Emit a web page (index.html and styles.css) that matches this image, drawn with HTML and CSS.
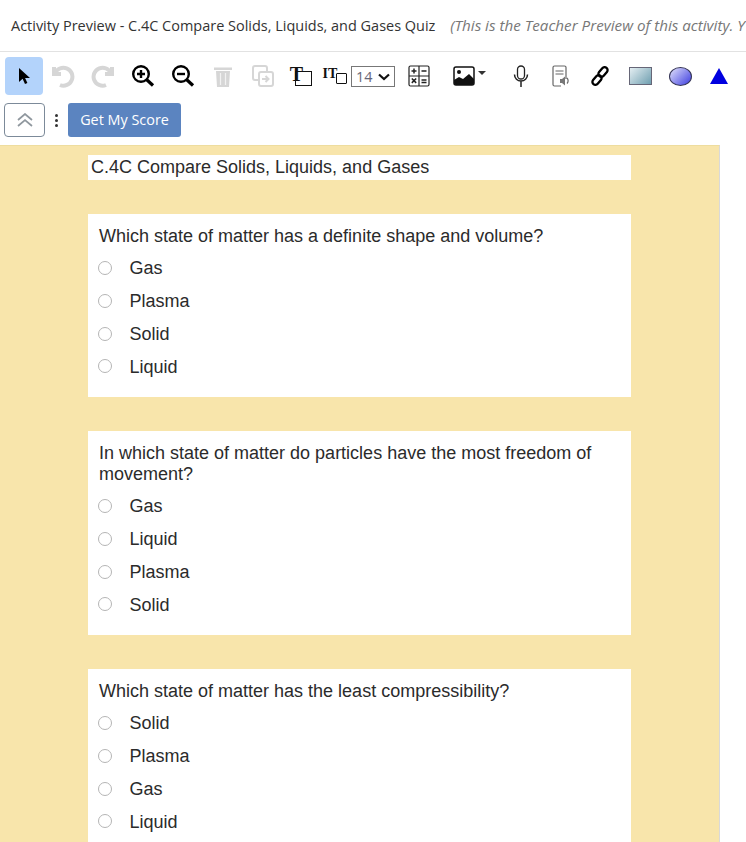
FILE: index.html
```html
<!DOCTYPE html>
<html lang="en">
<head>
  <meta charset="UTF-8" />
  <title>Activity Preview</title>
  <link rel="stylesheet" href="styles.css">
</head>
<body>

  <header class="title-bar">
    <span class="title">Activity Preview - C.4C Compare Solids, Liquids, and Gases Quiz</span>
    <em class="note">(This is the Teacher Preview of this activity. Y</em>
  </header>

  <div class="toolbar">
    <button class="tool active">
      <svg width="16" height="18" viewBox="0 0 16 18"><path d="M3 1v14l3.600-3.200L9 17l2.400-1-2.300-5H14z" fill="#000"/></svg>
    </button>
    <button class="tool">
      <svg width="24" height="24" viewBox="0 0 24 24" fill="none" stroke="#d6d6d6" stroke-width="4"><path d="M3 3v7h7"/><path d="M4 9.500A9 9 0 1 1 9 21"/></svg>
    </button>
    <button class="tool">
      <svg width="24" height="24" viewBox="0 0 24 24" fill="none" stroke="#d6d6d6" stroke-width="4"><path d="M21 3v7h-7"/><path d="M20 9.500A9 9 0 1 0 15 21"/></svg>
    </button>
    <button class="tool">
      <svg width="24" height="24" viewBox="0 0 24 24" fill="none" stroke="#000" stroke-width="2.400"><circle cx="10" cy="10" r="7.800"/><path d="M15.500 15.500l6.500 6" stroke-width="3.200"/><path d="M10 6v8M6 10h8"/></svg>
    </button>
    <button class="tool">
      <svg width="24" height="24" viewBox="0 0 24 24" fill="none" stroke="#000" stroke-width="2.400"><circle cx="10" cy="10" r="7.800"/><path d="M15.500 15.500l6.500 6" stroke-width="3.200"/><path d="M6 10h8"/></svg>
    </button>
    <button class="tool">
      <svg width="20" height="21" viewBox="0 0 20 21" fill="#d6d6d6"><path d="M1 1.500h18v2.500H1zM3 5h14l-1 16H4z"/><path d="M7.500 7v12M12.500 7v12" stroke="#f2f2f2" stroke-width="1.200"/></svg>
    </button>
    <button class="tool">
      <svg width="22" height="22" viewBox="0 0 22 22" fill="none" stroke="#d6d6d6" stroke-width="2"><path d="M6 15H3a2 2 0 0 1-2-2V3a2 2 0 0 1 2-2h10a2 2 0 0 1 2 2v3"/><rect x="7" y="7" width="14" height="14" rx="2"/><path d="M10 14h6M13.500 11l3 3-3 3"/></svg>
    </button>
    <button class="tool text-tool">
      <span class="tool-t">T</span><span class="tool-box"></span>
    </button>
    <button class="tool text-tool small">
      <span class="tool-t">IT</span><span class="tool-box"></span>
    </button>
    <div class="size-wrap">
      <select class="size"><option>14</option></select>
      <svg class="chevron" width="12" height="8" viewBox="0 0 12 8" fill="none" stroke="#111" stroke-width="2.200"><path d="M1 1.500l5 4.500 5-4.500"/></svg>
    </div>
    <button class="tool calc">
      <svg width="22" height="22" viewBox="0 0 22 22" fill="none" stroke="#222" stroke-width="1.200"><rect x="1" y="1" width="20" height="20" rx="1.500"/><path d="M11 1v20M1 11h20"/><path d="M3.500 6h5M6 3.500v5M13.500 6h5M13.500 15h5M13.500 17.500h5M3.800 13.500l4.400 4.400M8.200 13.500l-4.400 4.400" stroke-width="1.500"/></svg>
    </button>
    <button class="tool wide">
      <svg width="22" height="20" viewBox="0 0 22 20"><rect x="1" y="1" width="20" height="18" rx="2" fill="#fff" stroke="#111" stroke-width="1.500"/><circle cx="6" cy="6" r="2" fill="#111"/><path d="M1 14l5-3 4 2 6-5 5 5v4a2 2 0 0 1-2 2H3a2 2 0 0 1-2-2z" fill="#111"/></svg>
      <span class="caret"></span>
    </button>
    <button class="tool">
      <svg width="16" height="23" viewBox="0 0 16 23" fill="none" stroke="#222" stroke-width="1.300"><rect x="4.500" y="1" width="7" height="13" rx="3.500"/><path d="M1.500 9.500c0 4 3 6.500 6.500 6.500s6.500-2.500 6.500-6.500M8 16v6" stroke-width="1.500"/></svg>
    </button>
    <button class="tool">
      <svg width="18" height="22" viewBox="0 0 18 22" fill="none" stroke="#666" stroke-width="1.200"><path d="M14 14V2.500A1.500 1.500 0 0 0 12.500 1h-10A1.500 1.500 0 0 0 1 2.500v17A1.500 1.500 0 0 0 2.500 21H9"/><path d="M3.500 6h8M3.500 9h8"/><path d="M8 14h2l3-2.500v9L10 18H8z" fill="#777" stroke="none"/><path d="M15 13c1.500 1.500 1.500 4 0 5.500"/></svg>
    </button>
    <button class="tool nudge">
      <svg width="22" height="22" viewBox="0 0 22 22" fill="none" stroke="#000" stroke-width="2.300"><rect x="11" y="1.500" width="6" height="11" rx="3" transform="rotate(40 14 7)"/><rect x="5" y="9.500" width="6" height="11" rx="3" transform="rotate(40 8 15)"/></svg>
    </button>
    <button class="tool"><span class="shape-rect"></span></button>
    <button class="tool"><span class="shape-oval"></span></button>
    <button class="tool nudge">
      <svg width="20" height="18" viewBox="0 0 20 18"><path d="M10 1l9 16H1z" fill="#0000e0"/></svg>
    </button>
  </div>

  <div class="actions">
    <button class="collapse">
      <svg width="16" height="14" viewBox="0 0 16 14" fill="none" stroke="#8f979e" stroke-width="1.700"><path d="M1 7l7-6 7 6M1 13l7-6 7 6"/></svg>
    </button>
    <span class="dots"><i></i><i></i><i></i></span>
    <button class="score">Get My Score</button>
  </div>

  <main class="sheet">
    <h1 class="quiz-title">C.4C Compare Solids, Liquids, and Gases</h1>

    <section class="question">
      <p class="prompt">Which state of matter has a definite shape and volume?</p>
      <label class="choice"><input type="radio" name="q1">Gas</label>
      <label class="choice"><input type="radio" name="q1">Plasma</label>
      <label class="choice"><input type="radio" name="q1">Solid</label>
      <label class="choice"><input type="radio" name="q1">Liquid</label>
    </section>

    <section class="question">
      <p class="prompt">In which state of matter do particles have the most freedom of movement?</p>
      <label class="choice"><input type="radio" name="q2">Gas</label>
      <label class="choice"><input type="radio" name="q2">Liquid</label>
      <label class="choice"><input type="radio" name="q2">Plasma</label>
      <label class="choice"><input type="radio" name="q2">Solid</label>
    </section>

    <section class="question">
      <p class="prompt">Which state of matter has the least compressibility?</p>
      <label class="choice"><input type="radio" name="q3">Solid</label>
      <label class="choice"><input type="radio" name="q3">Plasma</label>
      <label class="choice"><input type="radio" name="q3">Gas</label>
      <label class="choice"><input type="radio" name="q3">Liquid</label>
    </section>
  </main>

</body>
</html>
```

FILE: styles.css
```css
html, body {
  height: 842px;
  overflow: hidden;
}

body {
  margin: 0;
  font-family: "Open Sans", sans-serif;
  background-color: #fff;
  color: #333;
}

button {
  font-family: inherit;
  cursor: pointer;
}

.title-bar {
  height: 52px;
  box-sizing: border-box;
  padding: 15px 0 0 11px;
  border-bottom: 1px solid #e2e2e2;
  font-size: 14.470px;
  line-height: 20px;
  white-space: nowrap;
  overflow: hidden;
}

.note {
  margin-left: 11px;
  font-size: 15.200px;
  color: #777;
}

/* Toolbar */
.toolbar {
  display: flex;
  align-items: center;
  height: 38px;
  margin-top: 5px;
  padding-left: 5px;
  white-space: nowrap;
}

.tool {
  flex: none;
  display: flex;
  align-items: center;
  justify-content: center;
  width: 40px;
  height: 38px;
  padding: 0;
  border: none;
  border-radius: 4px;
  background: none;
}

.tool.active {
  width: 38px;
  background-color: #b3d3fb;
}

.tool.nudge {
  margin-left: -1px;
}

.text-tool {
  width: 36px;
}

.tool-t {
  font-family: "Liberation Serif", serif;
  font-weight: bold;
  font-size: 20px;
  line-height: 1;
  color: #111;
  margin-top: -4px;
  margin-right: -8px;
}

.tool-box {
  flex: none;
  width: 15px;
  height: 13px;
  margin-top: 5px;
  border: 1px solid #111;
}

.text-tool.small {
  width: 32px;
}

.text-tool.small .tool-t {
  font-size: 14px;
  margin-top: -5px;
  margin-right: -1px;
}

.text-tool.small .tool-box {
  width: 9px;
  height: 9px;
  border-radius: 1px;
}

.size-wrap {
  flex: none;
  position: relative;
  width: 44px;
  height: 21px;
}

.size {
  display: block;
  width: 100%;
  height: 100%;
  padding: 0 0 0 4px;
  border: 1px solid #777;
  border-radius: 0;
  background: #fff;
  appearance: none;
  font-family: "Open Sans", sans-serif;
  font-size: 14.400px;
  color: #667;
}

.chevron {
  position: absolute;
  top: 7px;
  right: 5px;
}

.calc {
  margin-left: 4px;
}

.wide {
  width: 62px;
  padding-right: 2px;
  gap: 3px;
}

.caret {
  border-top: 4px solid #333;
  border-left: 4px solid transparent;
  border-right: 4px solid transparent;
  margin-bottom: 6px;
}

.shape-rect {
  width: 21px;
  height: 16px;
  border: 1px solid #667;
  background: linear-gradient(135deg, #e4eef2, #6f9fb0);
}

.shape-oval {
  width: 21px;
  height: 17px;
  border: 1px solid #335;
  border-radius: 50%;
  background: linear-gradient(135deg, #e2e2fb, #3d3de0);
}

/* Score row */
.actions {
  display: flex;
  align-items: center;
  height: 34px;
  margin-top: 8px;
  padding-left: 4px;
}

.collapse {
  display: flex;
  align-items: center;
  justify-content: center;
  width: 41px;
  height: 34px;
  padding: 0;
  border: 1px solid #7c8a99;
  border-radius: 4px;
  background: #fff;
}

.dots {
  display: flex;
  flex-direction: column;
  gap: 2px;
  margin: 0 10px;
}

.dots i {
  width: 3px;
  height: 3px;
  border-radius: 50%;
  background: #333;
}

.score {
  height: 34px;
  width: 113px;
  padding: 0 0 2px;
  border: none;
  border-radius: 3px;
  background-color: #5b84c0;
  color: #fff;
  font-size: 14.400px;
}

/* Quiz sheet */
.sheet {
  width: 543px;
  height: 697px;
  margin-top: 8px;
  padding: 9px 88px 0;
  background-color: #f8e5ab;
  border-right: 1px solid #d9d9d9;
  border-top: 1px solid #eedd9f;
  font-family: "Liberation Sans", sans-serif;
  font-size: 18px;
  color: #2b2b2b;
}

.quiz-title {
  height: 25px;
  margin: 0 0 34px;
  padding-left: 3px;
  background: #fff;
  font-size: 18px;
  font-weight: normal;
  line-height: 25px;
}

.question {
  padding: 12px 11px 13.200px;
  margin-bottom: 34px;
  background: #fff;
}

.prompt {
  margin: 0;
  line-height: 21px;
  padding-bottom: 5.600px;
}

.choice {
  display: flex;
  align-items: center;
  height: 32.800px;
}

.choice input {
  appearance: none;
  width: 14px;
  height: 14px;
  margin: -2px 17.500px 0 -1px;
  border: 1px solid #b5b5b5;
  border-radius: 50%;
  background: #fff;
}
```
